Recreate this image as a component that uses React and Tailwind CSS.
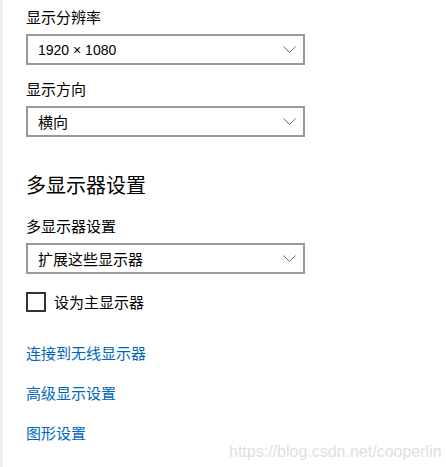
import { useState } from 'react'

const cjk = { fontFamily: '"Noto Sans CJK SC", "Noto Sans", sans-serif' }

const Chevron = () => (
  <svg width="13" height="7" viewBox="0 0 13 7" fill="none" className="shrink-0">
    <path d="M0.5 0.5 L6.5 6.5 L12.5 0.5" stroke="#6b6b6b" strokeWidth="1" />
  </svg>
)

const Select = ({ value, latin }) => (
  <div className="mt-[7px] flex h-[31px] w-[279px] items-center justify-between border-2 border-[#999999] bg-white pl-[10px] pr-[7px]">
    {latin ? (
      <span
        className="text-[14px] leading-5 text-black"
        style={{ fontFamily: '"Liberation Sans", Arial, sans-serif' }}
      >
        {value}
      </span>
    ) : (
      <span className="text-[15px] leading-5 text-black">{value}</span>
    )}
    <Chevron />
  </div>
)

const Label = ({ children, className = '' }) => (
  <div className={`h-5 text-[15px] leading-5 text-black ${className}`}>{children}</div>
)

const App = () => {
  const [primary, setPrimary] = useState(false)

  return (
    <div className="relative h-[467px] w-[446px] overflow-hidden bg-white" style={cjk}>
      <div className="flex h-full border-l-[3px] border-[#efefef] pl-[23px] pt-[7px]">
        <div className="flex flex-col">
          <Label>显示分辨率</Label>
          <Select value="1920 × 1080" latin />

          <Label className="mt-[14px]">显示方向</Label>
          <Select value="横向" />

          <h2 className="mt-[34px] text-[20px] font-normal leading-7 text-black">多显示器设置</h2>

          <Label className="mt-[17px]">多显示器设置</Label>
          <Select value="扩展这些显示器" />

          <label className="mt-[18px] flex items-center gap-[8px]">
            <button
              type="button"
              onClick={() => setPrimary(!primary)}
              className="h-5 w-5 border-2 border-[#333333] bg-white"
            />
            <span className="text-[15px] leading-5 text-black">设为主显示器</span>
          </label>

          <a className="mt-[31px] text-[15px] leading-5 text-[#0067c0]">连接到无线显示器</a>
          <a className="mt-5 text-[15px] leading-5 text-[#0067c0]">高级显示设置</a>
          <a className="mt-5 text-[15px] leading-5 text-[#0067c0]">图形设置</a>
        </div>
      </div>

      <div
        className="absolute left-[229px] top-[442px] whitespace-nowrap text-[16px] leading-5 text-[#e0e0e0]"
        style={{ fontFamily: '"Liberation Sans", Arial, sans-serif' }}
      >
        https://blog.csdn.net/cooperlin
      </div>
    </div>
  )
}

export default App
